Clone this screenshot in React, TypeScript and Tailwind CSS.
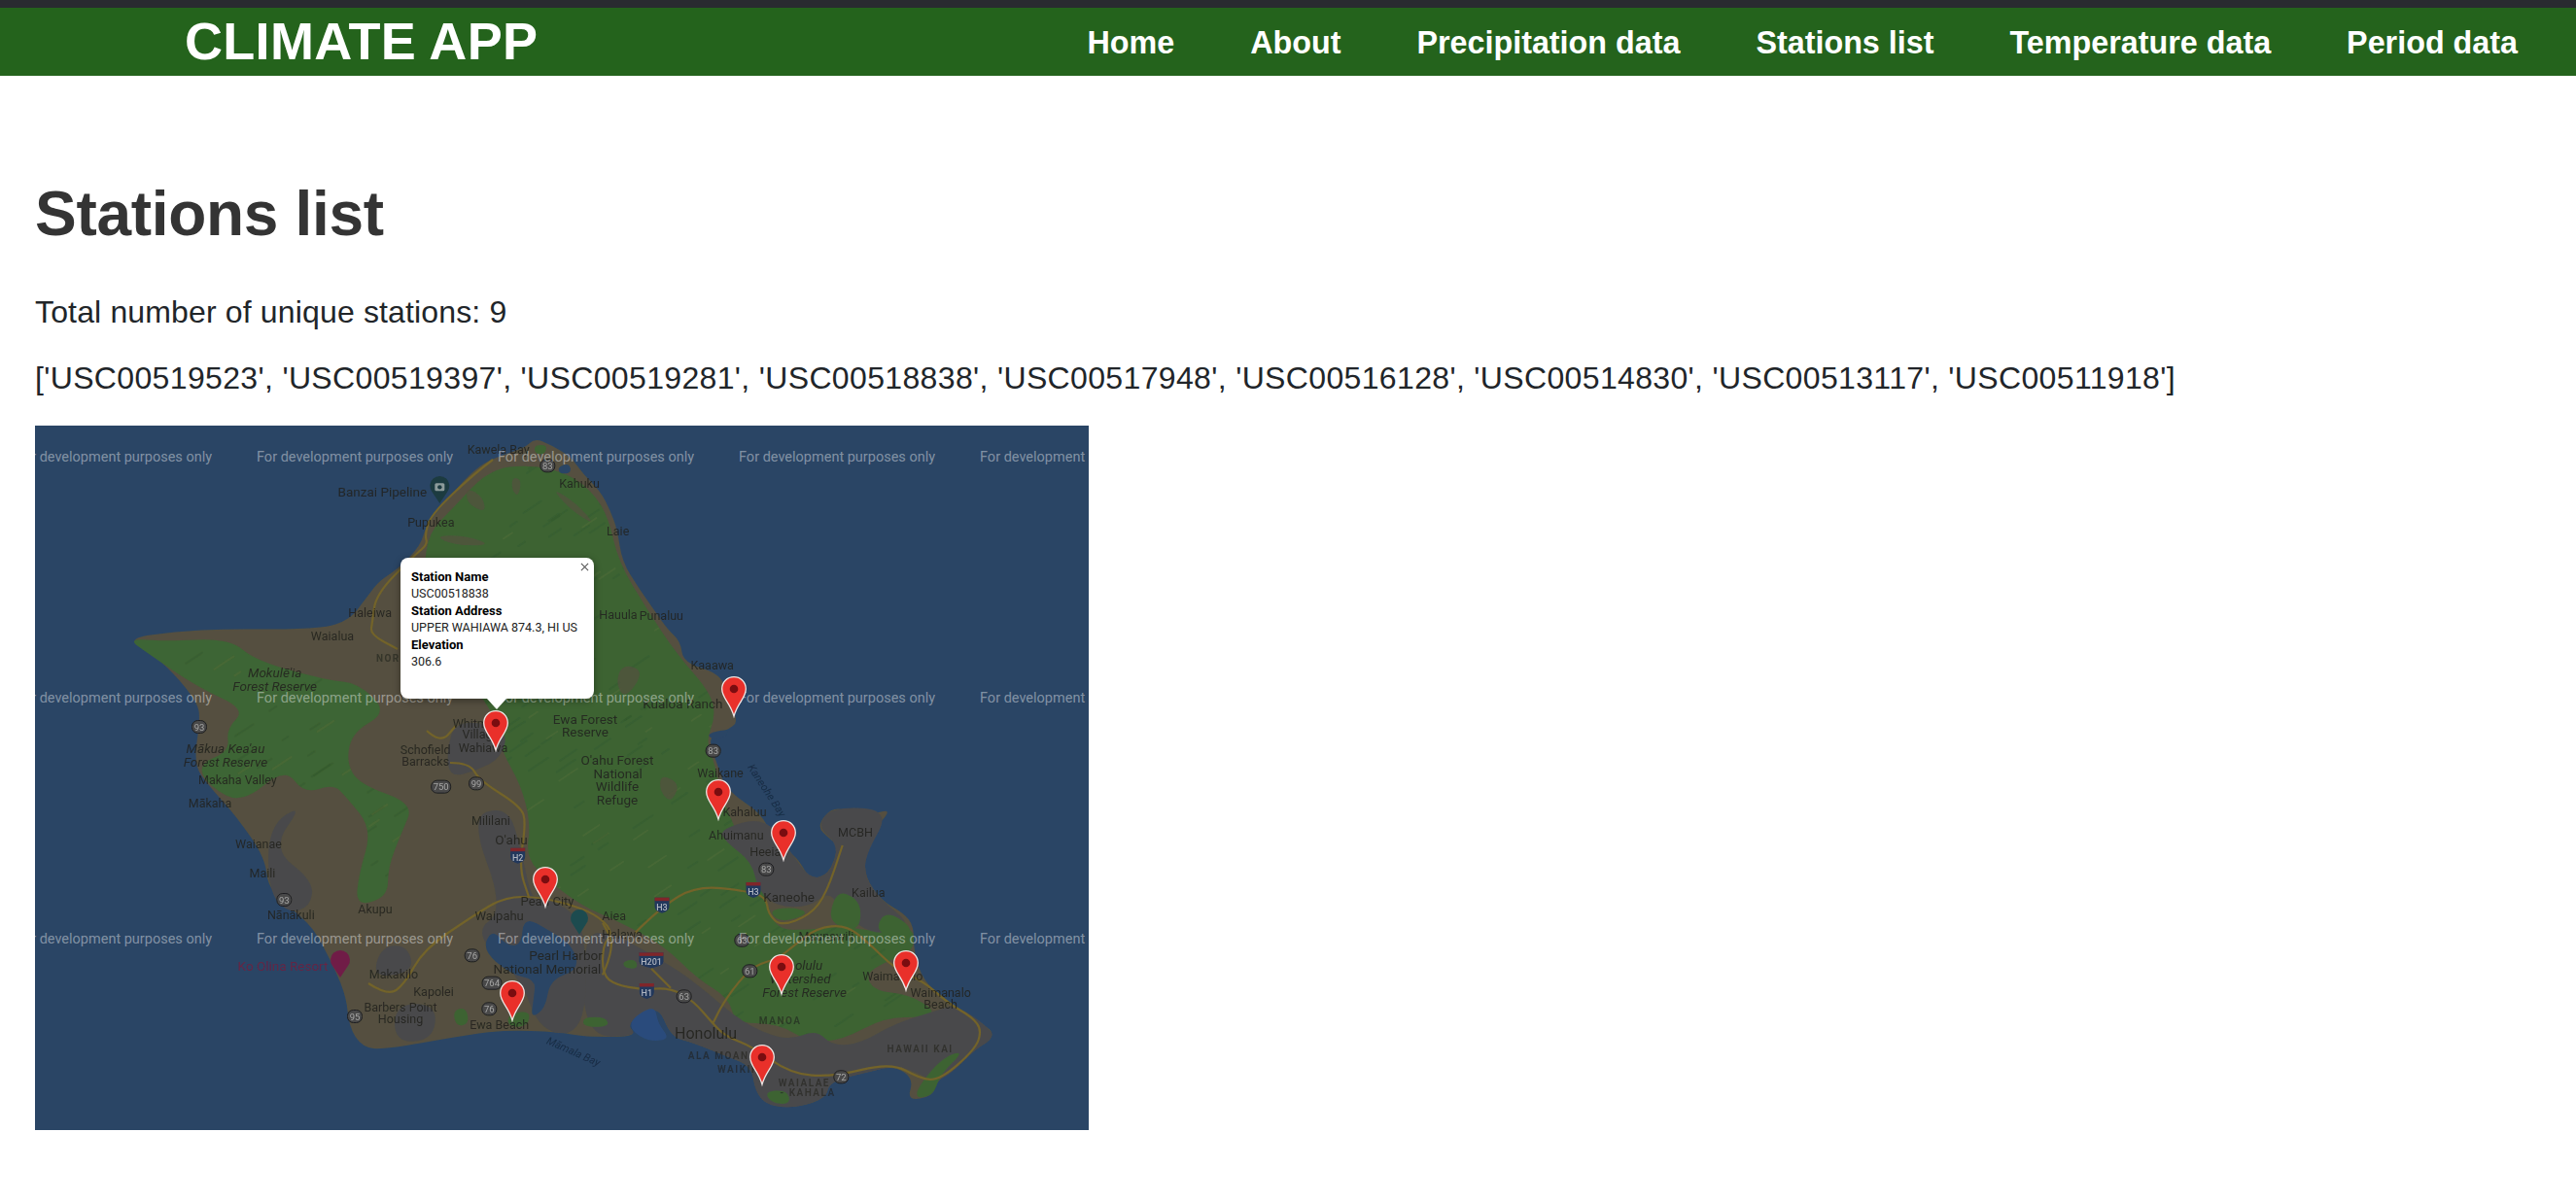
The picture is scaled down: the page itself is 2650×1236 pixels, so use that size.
import * as React from "react";

type Pt = [number, number];

// reference crops -> map coordinates
const z6 = (x: number, y: number): Pt => [x / 3, y / 3 + 202];
const z7 = (x: number, y: number): Pt => [x / 3 + 564, y / 3 + 202];
const z8 = (x: number, y: number): Pt => [x / 3 + 304, y / 3];

const smooth = (pts: Pt[], closed = true) => {
  if (!closed) {
    let d = `M${pts[0][0]} ${pts[0][1]}`;
    for (let i = 1; i < pts.length - 1; i++) {
      const mx = (pts[i][0] + pts[i + 1][0]) / 2;
      const my = (pts[i][1] + pts[i + 1][1]) / 2;
      d += `Q${pts[i][0]} ${pts[i][1]} ${mx} ${my}`;
    }
    const last = pts[pts.length - 1];
    return d + `L${last[0]} ${last[1]}`;
  }
  const n = pts.length;
  const mid = (a: Pt, b: Pt) => `${(a[0] + b[0]) / 2} ${(a[1] + b[1]) / 2}`;
  let d = `M${mid(pts[n - 1], pts[0])}`;
  for (let i = 0; i < n; i++) {
    d += `Q${pts[i][0]} ${pts[i][1]} ${mid(pts[i], pts[(i + 1) % n])}`;
  }
  return d + "Z";
};

const island: Pt[] = [
  [514, 13], [531, 20], [551, 32], [564, 50], [582, 68], [592, 88], [599, 107], [604, 140], [621, 167], [637, 190], [651, 210],
  [664, 222], [667, 244], [704, 255], [712, 275], [721, 299], [721, 309], [697, 319], [694, 327], [702, 349], [711, 375],
  [751, 402], [757, 429], [777, 439], [787, 449], [797, 467], [817, 462], [827, 432], [817, 425], [804, 412], [821, 392],
  [841, 399], [864, 399], [881, 395], [864, 415], [854, 442], [854, 465], [871, 489], [894, 502], [904, 515], [904, 542],
  [914, 572], [941, 595], [966, 612], [985, 622], [984, 632], [967, 642], [944, 665], [927, 675], [924, 690], [897, 695],
  [904, 672], [884, 659], [857, 665], [817, 675], [814, 692], [784, 702], [754, 700], [741, 685], [737, 659], [711, 649],
  [677, 635], [654, 629], [641, 595], [607, 615], [621, 629], [564, 629], [540, 624], [480, 622], [433, 629], [360, 642],
  [337, 640], [323, 619], [320, 585], [300, 542], [283, 512], [240, 479], [237, 445], [207, 402], [180, 372], [163, 349],
  [170, 302], [167, 285], [143, 255], [117, 232], [95, 219], [143, 212], [200, 209], [267, 210], [320, 205], [344, 173],
  [354, 160], [374, 147], [397, 123], [402, 103], [427, 73], [447, 50], [467, 35], [504, 23],
];

const koolau: Pt[] = [
  [467, 45], [510, 40], [550, 50], [575, 70], [590, 95], [600, 140], [630, 190], [660, 235], [695, 275], [700, 300], [690, 325],
  [700, 350], [705, 380], [725, 425], [745, 470], [754, 495], [764, 519], [797, 519], [831, 515], [871, 522], [904, 515],
  [904, 542], [874, 552], [854, 565], [864, 582], [897, 585], [927, 602], [914, 609], [874, 609], [831, 632], [797, 635],
  [764, 615], [720, 615], [714, 589], [681, 569], [647, 535], [600, 510], [564, 495], [530, 470], [505, 445], [510, 410],
  [500, 370], [480, 335], [470, 290], [440, 260], [395, 200], [400, 150], [405, 110], [430, 85],
];

const waianae: Pt[] = [
  [95, 219], [133, 222], [200, 219], [227, 242], [300, 262], [333, 265], [363, 295], [327, 315], [320, 345], [333, 369],
  [390, 389], [377, 419], [363, 455], [363, 485], [330, 495], [333, 462], [347, 415], [320, 382], [307, 369], [277, 379],
  [257, 352], [213, 389], [180, 372], [167, 349], [200, 335], [197, 312], [217, 292], [167, 269], [117, 235],
];

const urban: Pt[][] = [
  [z7(0, 960), z7(90, 960), z7(180, 1010), z7(300, 1080), z7(390, 1150), z7(470, 1220), z7(560, 1270), z7(640, 1290), z7(720, 1260), z7(770, 1310), z7(860, 1300), z7(960, 1240), z7(1090, 1200), z7(1150, 1180), z7(1262, 1260), z7(1260, 1290), z7(1210, 1320), z7(1140, 1390), z7(1090, 1420), z7(1000, 1380), z7(960, 1370), z7(880, 1390), z7(760, 1420), z7(750, 1470), z7(660, 1500), z7(570, 1495), z7(530, 1450), z7(520, 1370), z7(440, 1340), z7(340, 1300), z7(270, 1280), z7(230, 1180), z7(130, 1240), z7(170, 1280), z7(0, 1280)],
  [z7(420, 640), z7(560, 600), z7(640, 710), z7(700, 795), z7(760, 780), z7(790, 690), z7(720, 630), z7(770, 570), z7(950, 580), z7(870, 720), z7(870, 790), z7(920, 860), z7(1020, 940), z7(900, 970), z7(800, 900), z7(760, 830), z7(700, 880), z7(600, 880), z7(540, 830), z7(520, 740), z7(440, 680)],
  [z6(1340, 600), z6(1460, 570), z6(1500, 700), z6(1530, 850), z6(1560, 850), z6(1640, 880), z6(1700, 950), z6(1700, 1270), z6(1560, 1270), z6(1500, 1100), z6(1350, 960), z6(1450, 890)],
  [z6(1280, 480), z6(1360, 460), z6(1440, 420), z6(1460, 330), z6(1300, 300), z6(1270, 400)],
  [z6(720, 630), z6(830, 560), z6(730, 700), z6(860, 800), z6(850, 880), z6(780, 900), z6(720, 830)],
  [z6(1070, 1000), z6(1150, 1000), z6(1170, 1080), z6(1040, 1100)],
  [z6(1110, 1180), z6(1240, 1180), z6(1230, 1290), z6(1110, 1300)],
];

const patches: Pt[][] = [
  [z7(800, 830), z7(860, 870), z7(850, 960), z7(760, 930), z7(770, 860)],
  [z7(930, 890), z7(1015, 940), z7(1000, 985), z7(900, 960)],
  [z7(570, 890), z7(650, 880), z7(700, 900), z7(610, 930)],
  [z7(560, 1450), z7(630, 1445), z7(640, 1490), z7(580, 1485)],
  [z7(1010, 1470), z7(1100, 1350), z7(1180, 1320), z7(1100, 1400), z7(1080, 1465)],
  [z6(1290, 1200), z6(1330, 1190), z6(1340, 1240), z6(1300, 1250)],
  [z6(1460, 1210), z6(1530, 1200), z6(1520, 1250), z6(1460, 1250)],
  [z7(0, 1220), z7(70, 1220), z7(80, 1250), z7(0, 1250)],
  [z7(120, 1050), z7(160, 1040), z7(170, 1070), z7(130, 1070)],
  [z8(630, 60), z8(670, 60), z8(660, 90), z8(630, 85)],
];

const brownSpots: Pt[][] = [
  [z8(420, 190), z8(470, 220), z8(480, 270), z8(420, 240)],
  [z8(560, 160), z8(590, 165), z8(580, 220), z8(560, 200)],
  [z8(680, 190), z8(760, 240), z8(820, 310), z8(740, 260)],
  [z8(320, 340), z8(420, 340), z8(500, 370), z8(380, 370)],
  [z7(120, 130), z7(190, 150), z7(130, 240), z7(100, 190)],
  [z7(240, 470), z7(300, 500), z7(270, 560), z7(235, 520)],
];

const water: Pt[][] = [
  [[460, 540], [470, 518], [485, 535], [500, 535], [503, 505], [530, 520], [553, 535], [560, 560], [530, 570], [525, 600], [510, 610], [513, 590], [515, 570], [490, 565]],
  [z7(380, 345), z7(450, 330), z7(440, 355), z7(400, 365)],
  [z8(700, 130), z8(735, 115), z8(745, 145), z8(710, 150)],
];

const harbor: Pt[] = [z7(130, 1240), z7(220, 1180), z7(230, 1240), z7(270, 1290), z7(190, 1295)];

const roads: Pt[][] = [
  [[471, 35], [451, 50], [407, 92], [401, 113], [404, 122], [391, 133], [351, 173], [347, 202], [345, 215], [373, 230]],
  [[403, 314], [417, 327], [433, 309]],
  [[427, 347], [447, 347], [457, 365], [500, 392], [505, 409], [498, 455], [508, 485]],
  [[343, 574], [363, 587], [380, 575], [400, 539], [450, 505], [483, 485], [520, 485], z7(0, 885), z7(60, 920), z7(90, 960), z7(60, 1000), z7(60, 1090), z7(100, 1120), z7(180, 1135), z7(270, 1130), z7(340, 1170), z7(400, 1240), z7(440, 1280), z7(520, 1310), z7(640, 1395), z7(770, 1405), z7(950, 1360), z7(1040, 1410), z7(1100, 1415), z7(1210, 1320), z7(1230, 1260), z7(1200, 1220), z7(1130, 1180), z7(1050, 1110), z7(960, 1070), z7(880, 990), z7(810, 935), z7(720, 945), z7(650, 1000), z7(600, 1040), z7(530, 1060), z7(480, 1110), z7(430, 1180), z7(400, 1240)],
  [z7(160, 960), z7(240, 880), z7(350, 815), z7(500, 830), z7(565, 850), z7(570, 900), z7(610, 940), z7(700, 905), z7(750, 840), z7(800, 690)],
  [z7(60, 1090), z7(100, 1000), z7(60, 930)],
  [z7(210, 1070), z7(270, 1130)],
];

type Label = { t: string; p: Pt; s?: number; i?: boolean; b?: boolean; c?: string; r?: number; ls?: number };

const labels: Label[] = [
  { t: "Kawela Bay", p: z8(518, 72) },
  { t: "Banzai Pipeline", p: z8(160, 203), s: 13.5 },
  { t: "Pupukea", p: z8(310, 297) },
  { t: "Kahuku", p: z8(768, 179) },
  { t: "Laie", p: z8(887, 324) },
  { t: "Haleiwa", p: z8(122, 577) },
  { t: "Hauula", p: z8(888, 582) },
  { t: "Punaluu", p: z8(1021, 586) },
  { t: "Waialua", p: z6(918, 43) },
  { t: "NOR", p: z6(1090, 112), s: 10, b: true, ls: 1.5 },
  { t: "Mokulē'ia", p: z6(740, 156), s: 13.5, i: true },
  { t: "Forest Reserve", p: z6(740, 197), s: 13.5, i: true },
  { t: "Mākua Kea'au", p: z6(588, 391), s: 13.5, i: true },
  { t: "Forest Reserve", p: z6(588, 433), s: 13.5, i: true },
  { t: "Makaha Valley", p: z6(625, 487) },
  { t: "Mākaha", p: z6(540, 558) },
  { t: "Waianae", p: z6(690, 684) },
  { t: "Maili", p: z6(702, 775) },
  { t: "Nānākuli", p: z6(790, 903) },
  { t: "Akupu", p: z6(1050, 887) },
  { t: "Ko Olina Resort", p: z6(765, 1061), s: 13.5, c: "#6f2140" },
  { t: "Makakilo", p: z6(1107, 1087) },
  { t: "Kapolei", p: z6(1230, 1140) },
  { t: "Barbers Point", p: z6(1128, 1189) },
  { t: "Housing", p: z6(1128, 1224) },
  { t: "Ewa Beach", p: z6(1433, 1242) },
  { t: "Schofield", p: z6(1205, 395) },
  { t: "Barracks", p: z6(1205, 430) },
  { t: "Whitmore", p: z6(1370, 312) },
  { t: "Village", p: z6(1375, 347) },
  { t: "Wahiawa", p: z6(1383, 387) },
  { t: "Mililani", p: z6(1407, 613) },
  { t: "O'ahu", p: z6(1470, 671), s: 13.5 },
  { t: "Waipahu", p: z6(1433, 907), s: 13 },
  { t: "Pearl City", p: [527, 489], s: 13 },
  { t: "Aiea", p: z7(95, 908) },
  { t: "Halawa", p: z7(120, 965) },
  { t: "Pearl Harbor", p: [546, 545], s: 13.5 },
  { t: "National Memorial", p: [527, 559], s: 13.5 },
  { t: "Ewa Forest", p: [566, 302], s: 13.5 },
  { t: "Reserve", p: [566, 315], s: 13.5 },
  { t: "O'ahu Forest", p: z7(105, 427), s: 13.5 },
  { t: "National", p: z7(107, 467), s: 13.5 },
  { t: "Wildlife", p: z7(105, 508), s: 13.5 },
  { t: "Refuge", p: z7(105, 548), s: 13.5 },
  { t: "Kaaawa", p: z7(398, 132) },
  { t: "Kualoa Ranch", p: z7(307, 253), s: 13.5 },
  { t: "Waikane", p: z7(423, 465) },
  { t: "Kahaluu", p: z7(498, 585) },
  { t: "Ahuimanu", p: z7(472, 658) },
  { t: "Heeia", p: z7(562, 708) },
  { t: "MCBH", p: z7(840, 650) },
  { t: "Kaneohe", p: z7(635, 848), s: 13.5 },
  { t: "Kailua", p: z7(880, 836) },
  { t: "Maunawili", p: z7(750, 970) },
  { t: "Honolulu", p: z7(660, 1060), s: 13.5, i: true },
  { t: "Watershed", p: z7(670, 1101), s: 13.5, i: true },
  { t: "Forest Reserve", p: z7(683, 1143), s: 13.5, i: true },
  { t: "Waimanalo", p: z7(955, 1092) },
  { t: "Waimanalo", p: z7(1103, 1144) },
  { t: "Beach", p: z7(1103, 1179) },
  { t: "MANOA", p: z7(608, 1230), s: 10, b: true, ls: 1.5 },
  { t: "Honolulu", p: z7(378, 1270), s: 16 },
  { t: "ALA MOANA", p: z7(430, 1338), s: 10, b: true, ls: 1.5 },
  { t: "WAIKIKI", p: z7(485, 1380), s: 10, b: true, ls: 1.5 },
  { t: "WAIALAE", p: z7(682, 1424), s: 10, b: true, ls: 1.5 },
  { t: "- KAHALA", p: z7(693, 1452), s: 10, b: true, ls: 1.5 },
  { t: "HAWAII KAI", p: z7(1040, 1318), s: 10, b: true, ls: 1.5 },
  { t: "Kaneohe Bay", p: z7(567, 520), s: 11, i: true, r: 57, c: "#16283f" },
  { t: "Māmala Bay", p: [554, 644], s: 11, i: true, r: 24, c: "#16283f" },
];

const shields: { t: string; p: Pt }[] = [
  { t: "83", p: z8(670, 124) },
  { t: "93", p: z6(507, 324) },
  { t: "93", p: z6(769, 858) },
  { t: "95", p: z6(987, 1218) },
  { t: "750", p: z6(1253, 509) },
  { t: "99", p: z6(1362, 499) },
  { t: "76", p: z6(1349, 1030) },
  { t: "764", p: z6(1410, 1115) },
  { t: "76", p: z6(1402, 1195) },
  { t: "83", p: z7(401, 398) },
  { t: "83", p: z7(565, 764) },
  { t: "61", p: z7(514, 1078) },
  { t: "63", p: z7(311, 1156) },
  { t: "72", p: z7(796, 1405) },
  { t: "63", p: z7(490, 983) },
];

const interstates: { t: string; p: Pt }[] = [
  { t: "H2", p: z6(1490, 722) },
  { t: "H3", p: z7(525, 828) },
  { t: "H3", p: z7(243, 875) },
  { t: "H201", p: z7(210, 1045) },
  { t: "H1", p: z7(196, 1140) },
];

// marker tips
const markers: Pt[] = [
  [474, 334], [719, 299], [703, 405], [770, 447], [525, 495], [491, 612], [768, 585], [896, 581], [748, 678],
];

const ridges = Array.from({ length: 520 }, (_, i) => {
  const a = Math.sin(i * 12.9898) * 43758.5453;
  const b = Math.sin(i * 78.233) * 12543.123;
  const c = Math.sin(i * 37.719) * 9631.77;
  const x = 90 + (a - Math.floor(a)) * 840;
  const y = 40 + (b - Math.floor(b)) * 600;
  const len = 6 + (c - Math.floor(c)) * 16;
  return { x, y, len, light: i % 3 === 0 };
});

const Pin = ({ p }: { p: Pt }) => (
  <g transform={`translate(${p[0] - 13} ${p[1] - 41})`}>
    <path
      d="M13 .7C6 .7.7 6 .7 13c0 9.500 8.300 13.500 12.300 28C17 26.500 25.300 22.500 25.300 13 25.300 6 20 .7 13 .7z"
      fill="#e9302a"
      stroke="#eee6e4"
      strokeWidth="1.300"
    />
    <circle cx="13" cy="13" r="4.300" fill="#7a0d10" />
  </g>
);

const MapPic = () => (
  <svg viewBox="0 0 1084 725" width="1084" height="725" className="block font-['Roboto',sans-serif]">
    <defs>
      <clipPath id="green-clip">
        <path d={smooth(koolau)} />
        <path d={smooth(waianae)} />
      </clipPath>
      <filter id="soft" x="-5%" y="-5%" width="110%" height="110%">
        <feGaussianBlur stdDeviation="0.7" />
      </filter>
    </defs>
    <rect width="1084" height="725" fill="#2a4565" />
    <g filter="url(#soft)">
      <path d={smooth(island)} fill="#54503f" />
      <path d={smooth(koolau)} fill="#3c6433" />
      <path d={smooth(waianae)} fill="#3e6534" />
      <g clipPath="url(#green-clip)" strokeLinecap="round">
        {ridges.map((r, i) => (
          <line
            key={i}
            x1={r.x}
            y1={r.y}
            x2={r.x + r.len * 0.9}
            y2={r.y - r.len * 0.6}
            stroke={r.light ? "#5a6e3a" : "#31562b"}
            strokeWidth="2"
            opacity="0.35"
          />
        ))}
      </g>
      {brownSpots.map((s, i) => (
        <path key={i} d={smooth(s)} fill="#54503f" opacity="0.7" />
      ))}
      {urban.map((u, i) => (
        <path key={i} d={smooth(u)} fill="#4a4a4b" />
      ))}
      {patches.map((u, i) => (
        <path key={i} d={smooth(u)} fill="#3c6433" />
      ))}
      {water.map((w, i) => (
        <path key={i} d={smooth(w)} fill="#2a4565" />
      ))}
      <path d={smooth(harbor)} fill="#2b4c7c" />
      {roads.map((r, i) => (
        <path key={i} d={smooth(r, false)} fill="none" stroke="#736329" strokeWidth="2.200" strokeLinejoin="round" />
      ))}
      {shields.map((s, i) => {
        const w = s.t.length === 3 ? 20 : 15;
        return (
          <g key={i}>
            <rect x={s.p[0] - w / 2} y={s.p[1] - 6.500} width={w} height="13" rx="6" fill="#48484a" stroke="#1f1f20" strokeWidth="1" />
            <text x={s.p[0]} y={s.p[1] + 3.500} fontSize="9.500" textAnchor="middle" fill="#a6a6a4">
              {s.t}
            </text>
          </g>
        );
      })}
      {interstates.map((s, i) => {
        const w = s.t.length > 2 ? 25 : 15;
        return (
          <g key={i}>
            <path
              d={`M${s.p[0] - w / 2} ${s.p[1] - 8}h${w}v9q0 5-${w / 2} 7q-${w / 2}-2-${w / 2}-7z`}
              fill="#22375c"
            />
            <rect x={s.p[0] - w / 2} y={s.p[1] - 8} width={w} height="3.500" fill="#80282c" />
            <text x={s.p[0]} y={s.p[1] + 5} fontSize="9" textAnchor="middle" fill="#aeb4bf" fontWeight="500">
              {s.t}
            </text>
          </g>
        );
      })}
      {labels.map((l, i) => (
        <text
          key={i}
          x={l.p[0]}
          y={l.p[1] + (l.s ?? 12.500) * 0.36}
          fontSize={l.s ?? 12.500}
          fontStyle={l.i ? "italic" : "normal"}
          fontWeight={l.b ? 700 : 400}
          letterSpacing={l.ls ?? 0}
          textAnchor="middle"
          fill={l.c ?? "#22221e"}
          opacity={l.b ? 0.6 : 0.85}
          transform={l.r ? `rotate(${l.r} ${l.p[0]} ${l.p[1]})` : undefined}
        >
          {l.t}
        </text>
      ))}
      {/* place pins */}
      <g>
        <path d={`M${z8(337, 240)[0]} ${z8(337, 240)[1]}l-8-12a10 10 0 1 1 16 0z`} fill="#1d3a40" />
        <rect x={z8(337, 190)[0] - 5} y={z8(337, 190)[1] - 4} width="10" height="8" rx="1.500" fill="#8c9b9a" />
        <circle cx={z8(337, 190)[0]} cy={z8(337, 190)[1]} r="2.200" fill="#1d3a40" />
        <path d={`M${z6(942, 1098)[0]} ${z6(942, 1098)[1]}l-8-12a10 10 0 1 1 16 0z`} fill="#6f1f47" />
        <path d={`M${z7(-12, 965)[0]} ${z7(-12, 965)[1]}l-7-11a9 9 0 1 1 14 0z`} fill="#1d4c50" />
      </g>
    </g>
    {[37, 285, 533].map((y) =>
      [-20, 228, 476, 724, 972].map((x) => (
        <text key={`${x}-${y}`} x={x} y={y} fontSize="14.500" fill="#ffffff" fillOpacity="0.42">
          For development purposes only
        </text>
      ))
    )}
    {markers.map((m, i) => (
      <Pin key={i} p={m} />
    ))}
  </svg>
);

const navLinks = ["Home", "About", "Precipitation data", "Stations list", "Temperature data", "Period data"];

const stations =
  "['USC00519523', 'USC00519397', 'USC00519281', 'USC00518838', 'USC00517948', 'USC00516128', 'USC00514830', 'USC00513117', 'USC00511918']";

export default function App() {
  return (
    <div className="min-h-[1236px] bg-white font-['Liberation_Sans',Arial,sans-serif] text-[#212529]">
      {/* Navbar */}
      <div className="h-2 bg-[#292b30]" />
      <nav className="flex h-[70px] items-center justify-between bg-[#24631c] pl-[190px] pr-[60px] text-white">
        <a className="-mt-[2px] text-[54px] font-bold leading-none tracking-[0.3px]">CLIMATE APP</a>
        <div className="mt-[2px] flex items-center gap-[78px]">
          {navLinks.map((l) => (
            <a key={l} className="text-[32.300px] font-bold leading-none">
              {l}
            </a>
          ))}
        </div>
      </nav>

      <main className="px-[36px] pt-[102px]">
        <h1 className="text-[64px] font-bold leading-[80px] tracking-[-0.3px] text-[#343434]">Stations list</h1>
        <p className="mt-[37px] text-[32px] leading-[48px] tracking-[0.15px]">Total number of unique stations: 9</p>
        <p className="mt-[20px] text-[32px] leading-[48px] tracking-[0.35px]">{stations}</p>

        {/* Map */}
        <div className="relative mt-[25px] h-[725px] w-[1084px] overflow-hidden">
          <MapPic />
          <div className="absolute left-[376px] top-[136px] h-[145px] w-[199px] rounded-[8px] bg-white pl-[11px] pt-[11px] font-['Roboto',sans-serif] text-[12.500px] leading-[17.400px] text-[#222] shadow-[0_2px_7px_1px_rgba(0,0,0,0.3)]">
            <div className="text-[13px] font-bold text-black">Station Name</div>
            <div>USC00518838</div>
            <div className="text-[13px] font-bold text-black">Station Address</div>
            <div>UPPER WAHIAWA 874.3, HI US</div>
            <div className="text-[13px] font-bold text-black">Elevation</div>
            <div>306.6</div>
            <svg viewBox="0 0 10 10" className="absolute right-[5px] top-[5px] h-[9px] w-[9px]" fill="none" stroke="#555" strokeWidth="1.200">
              <path d="M1 1l8 8M9 1l-8 8" />
            </svg>
            <div className="absolute left-[89px] top-[145px] h-0 w-0 border-x-[10px] border-t-[11px] border-x-transparent border-t-white" />
          </div>
        </div>
      </main>
    </div>
  );
}
